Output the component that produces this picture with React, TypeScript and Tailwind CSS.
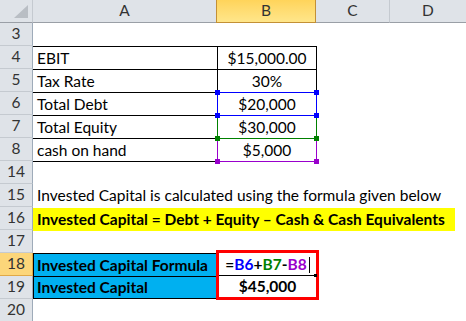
import type { ReactNode } from 'react'

function RowHead({ n, active }: { n: number; active?: boolean }) {
  return (
    <div
      className={
        active
          ? 'w-[33px] h-[23px] shrink-0 flex items-center justify-center bg-[#fcd67a] border-r border-b border-[#e0a947] text-[#333]'
          : 'w-[33px] h-[23px] shrink-0 flex items-center justify-center bg-[#dfe3e8] border-r border-b border-r-[#9eabb9] border-b-[#c5cad0] text-[#333]'
      }
    >
      {n}
    </div>
  )
}

function Row({ n, active, children }: { n: number; active?: boolean; children?: ReactNode }) {
  return (
    <div className="flex h-[23px]">
      <RowHead n={n} active={active} />
      {children}
    </div>
  )
}

function Handles() {
  return (
    <>
      <div className="absolute -left-[3px] -top-[3px] w-[5px] h-[5px] bg-current" />
      <div className="absolute -right-[3px] -top-[3px] w-[5px] h-[5px] bg-current" />
      <div className="absolute -left-[3px] -bottom-[3px] w-[5px] h-[5px] bg-current" />
      <div className="absolute -right-[3px] -bottom-[3px] w-[5px] h-[5px] bg-current" />
    </>
  )
}

function DataRow({ n, label, value, ring }: { n: number; label: string; value: string; ring?: ReactNode }) {
  return (
    <Row n={n}>
      <div className="w-[184px] h-full shrink-0 border-t border-black flex items-center pl-1 pt-px">{label}</div>
      <div className="relative w-[100px] h-full shrink-0 border-t border-x border-black flex items-center justify-center pt-px">
        {value}
        {ring}
      </div>
    </Row>
  )
}

export default function App() {
  return (
    <div className="w-[466px] h-[321px] overflow-hidden bg-white text-[15.5px] leading-none text-black font-['Lato',sans-serif]">
      {/* column headers */}
      <div className="flex h-[23px] text-[#333]">
        <div className="w-[33px] h-full shrink-0 bg-[#dfe3e8] border-r border-b border-r-[#c5cad0] border-b-[#9a9fa6] flex items-end justify-end p-[4px]">
          <svg width="14" height="13" viewBox="0 0 14 13">
            <polygon points="0,13 14,13 14,0" fill="#b9bec4" />
          </svg>
        </div>
        <div className="w-[183px] h-full shrink-0 bg-[#dfe3e8] border-b border-[#9a9fa6] flex items-center justify-center">A</div>
        <div className="w-[100px] h-full shrink-0 bg-gradient-to-b from-[#ffd45a] to-[#ffe68a] border-x border-b border-[#c39036] flex items-center justify-center">B</div>
        <div className="w-[74px] h-full shrink-0 bg-[#dfe3e8] border-r border-b border-r-[#c5cad0] border-b-[#9a9fa6] flex items-center justify-center">C</div>
        <div className="flex-1 h-full bg-[#dfe3e8] border-b border-[#9a9fa6] flex items-center justify-center">D</div>
      </div>

      <Row n={3} />
      <DataRow n={4} label="EBIT" value="$15,000.00" />
      <DataRow n={5} label="Tax Rate" value="30%" />
      <DataRow
        n={6}
        label="Total Debt"
        value="$20,000"
        ring={
          <div className="absolute -left-px -right-px top-[-1px] h-[24px] border border-[#0000ff] text-[#0000ff] z-30">
            <Handles />
          </div>
        }
      />
      <DataRow
        n={7}
        label="Total Equity"
        value="$30,000"
        ring={
          <div className="absolute -left-px -right-px top-[-1px] h-[24px] border border-[#008000] text-[#008000] z-20">
            <Handles />
          </div>
        }
      />
      <DataRow
        n={8}
        label="cash on hand"
        value="$5,000"
        ring={
          <div className="absolute -left-px -right-px top-[-1px] h-[24px] border border-[#9900cc] text-[#9900cc] z-10">
            <Handles />
          </div>
        }
      />
      <Row n={14}>
        <div className="w-[284px] h-full shrink-0 border-t border-black" />
      </Row>
      <Row n={15}>
        <div className="flex-1 h-full flex items-center pl-1 pt-px whitespace-nowrap">
          Invested Capital is calculated using the formula given below
        </div>
      </Row>
      <Row n={16}>
        <div className="w-[422px] h-[23px] mt-[1px] shrink-0 bg-[#ffff00] flex items-center pl-1 font-bold whitespace-nowrap">
          Invested Capital = Debt + Equity – Cash &amp; Cash Equivalents
        </div>
      </Row>
      <Row n={17} />

      {/* rows 18-19 */}
      <div className="flex h-[46px]">
        <div className="flex flex-col shrink-0">
          <RowHead n={18} active />
          <RowHead n={19} />
        </div>
        <div className="flex flex-col w-[184px] shrink-0 font-bold">
          <div className="h-[23px] bg-[#00b0f0] border-t border-l border-black flex items-center pl-[3px] pt-px">Invested Capital Formula</div>
          <div className="h-[23px] bg-[#00b0f0] border-y border-l border-black flex items-center pl-[3px]">Invested Capital</div>
        </div>
        <div className="self-start -mt-[3px] -ml-px w-[103px] h-[50px] shrink-0 border-[3px] border-[#ff0000] bg-white flex flex-col font-bold">
          <div className="relative h-[23px] border-b border-black flex items-center justify-center pt-px">
            <span>=</span>
            <span className="text-[#0000ff]">B6</span>
            <span>+</span>
            <span className="text-[#008000]">B7</span>
            <span>-</span>
            <span className="text-[#9900cc]">B8</span>
            <span className="inline-block w-px h-[16px] bg-black ml-[2px]" />
            <div className="absolute -right-px -bottom-[2px] w-[3px] h-[3px] bg-black" />
          </div>
          <div className="flex-1 flex items-center justify-center">$45,000</div>
        </div>
      </div>

      <Row n={20} />
    </div>
  )
}
